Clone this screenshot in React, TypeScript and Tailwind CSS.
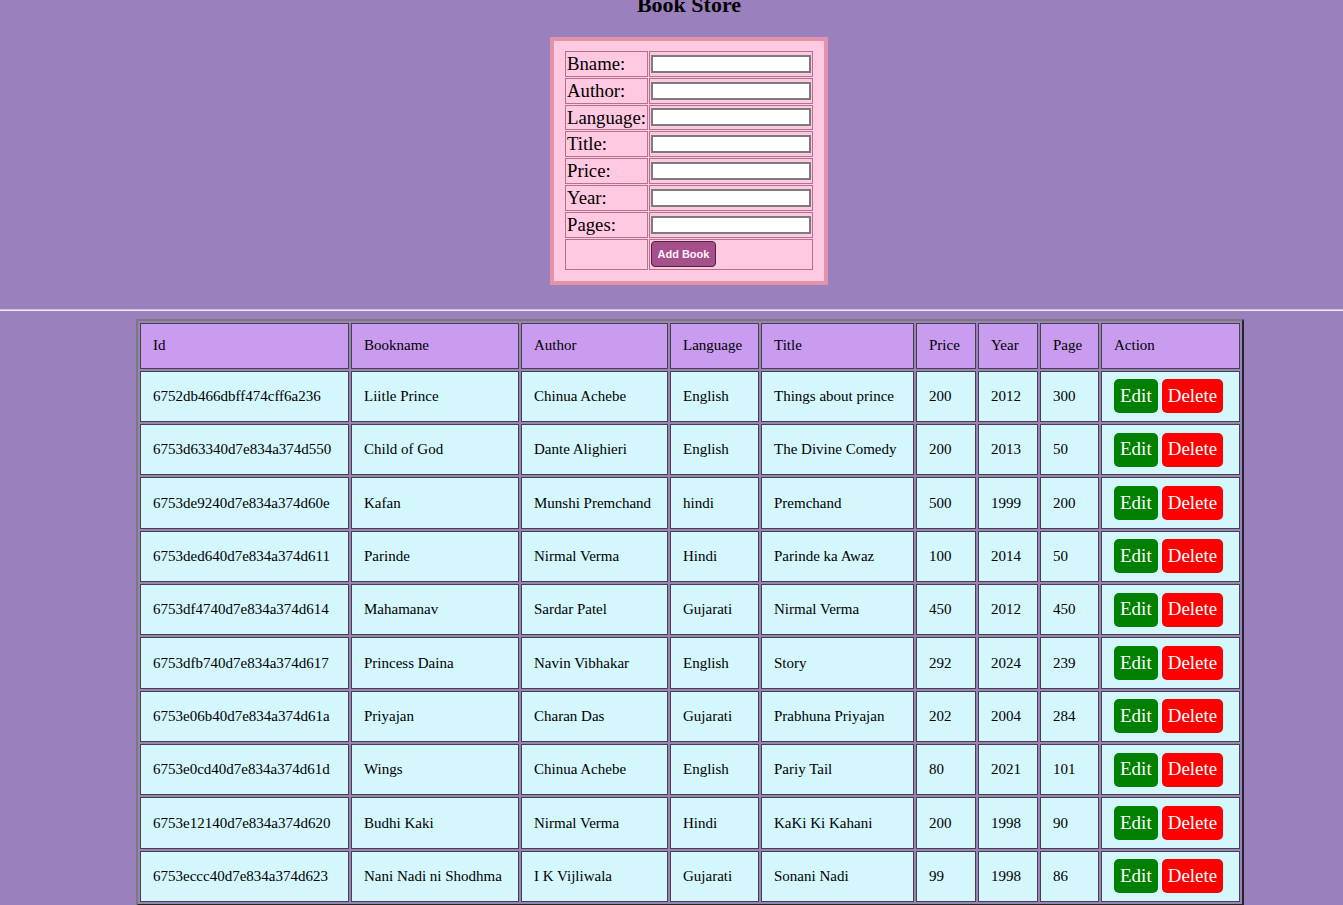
import React from "react";

const books = [
  ["6752db466dbff474cff6a236", "Liitle Prince", "Chinua Achebe", "English", "Things about prince", "200", "2012", "300"],
  ["6753d63340d7e834a374d550", "Child of God", "Dante Alighieri", "English", "The Divine Comedy", "200", "2013", "50"],
  ["6753de9240d7e834a374d60e", "Kafan", "Munshi Premchand", "hindi", "Premchand", "500", "1999", "200"],
  ["6753ded640d7e834a374d611", "Parinde", "Nirmal Verma", "Hindi", "Parinde ka Awaz", "100", "2014", "50"],
  ["6753df4740d7e834a374d614", "Mahamanav", "Sardar Patel", "Gujarati", "Nirmal Verma", "450", "2012", "450"],
  ["6753dfb740d7e834a374d617", "Princess Daina", "Navin Vibhakar", "English", "Story", "292", "2024", "239"],
  ["6753e06b40d7e834a374d61a", "Priyajan", "Charan Das", "Gujarati", "Prabhuna Priyajan", "202", "2004", "284"],
  ["6753e0cd40d7e834a374d61d", "Wings", "Chinua Achebe", "English", "Pariy Tail", "80", "2021", "101"],
  ["6753e12140d7e834a374d620", "Budhi Kaki", "Nirmal Verma", "Hindi", "KaKi Ki Kahani", "200", "1998", "90"],
  ["6753eccc40d7e834a374d623", "Nani Nadi ni Shodhma", "I K Vijliwala", "Gujarati", "Sonani Nadi", "99", "1998", "86"],
];

const fields = ["Bname:", "Author:", "Language:", "Title:", "Price:", "Year:", "Pages:"];

const headers: [string, string][] = [
  ["Id", "w-[209px]"],
  ["Bookname", "w-[168px]"],
  ["Author", "w-[147px]"],
  ["Language", "w-[89px]"],
  ["Title", "w-[153px]"],
  ["Price", "w-[60px]"],
  ["Year", "w-[60px]"],
  ["Page", "w-[59px]"],
  ["Action", "w-[139px]"],
];

export default function App() {
  return (
    <div
      className="h-[905px] overflow-hidden bg-[#9b80be] text-black"
      style={{ fontFamily: '"Liberation Serif", "Times New Roman", serif' }}
    >
      <div className="flex flex-col items-center pl-[35px]">
        <h2 className="-mt-[8px] text-[22px] font-bold leading-[25px] text-black">Book Store</h2>
        <div className="mt-[20px] border-4 border-[#e293aa] bg-[#ffc9e1] pt-[9px] pb-[10px] px-[10px]">
          <table className="border-separate border-spacing-[1px]">
            <tbody>
              {fields.map((f) => (
                <tr key={f}>
                  <td className="border border-[#b4738c] p-[1px] text-[18.72px] leading-[21.8px] whitespace-nowrap">
                    {f}
                  </td>
                  <td className="w-[164px] border border-[#b4738c] p-[1px] align-middle">
                    <input
                      type="text"
                      className="block h-[18px] w-[160px] border-2 border-[#7b7b7b] bg-white outline-none"
                    />
                  </td>
                </tr>
              ))}
              <tr>
                <td className="h-[31px] border border-[#b4738c] p-[1px]"></td>
                <td className="h-[31px] border border-[#b4738c] p-[1px] align-top">
                  <button
                    className="h-[26px] w-[65px] rounded-[4px] border border-[#4d2440] bg-[#a5508a] text-[11px] font-bold text-[#fdf2fa]"
                    style={{ fontFamily: '"Liberation Sans", Arial, sans-serif' }}
                  >
                    Add Book
                  </button>
                </td>
              </tr>
            </tbody>
          </table>
        </div>
      </div>
      <div className="mt-[24px] h-[2px] border-t border-t-[#c9c2d2] border-b border-b-[#ece9f0]"></div>
      <div className="flex flex-col items-center pl-[37px] pt-[8px]">
        <table className="table-fixed border-separate border-spacing-[2px] border-2 border-[#7a7a7a] [border-style:outset] text-[15px]">
          <thead>
            <tr>
              {headers.map(([h, w]) => (
                <th
                  key={h}
                  className={`${w} h-[46px] border border-[#444] bg-[#c99cf0] px-[12px] text-left align-middle font-normal`}
                >
                  {h}
                </th>
              ))}
            </tr>
          </thead>
          <tbody>
            {books.map((b) => (
              <tr key={b[0]}>
                {b.map((c, i) => (
                  <td
                    key={i}
                    className="h-[51.33px] border border-[#444] bg-[#d4f6fd] px-[12px] py-0 align-middle whitespace-nowrap"
                  >
                    {c}
                  </td>
                ))}
                <td className="h-[51.33px] border border-[#444] bg-[#d4f6fd] px-[12px] py-0 align-middle">
                  <div className="flex gap-[4px]">
                    <button className="h-[34px] rounded-[5px] bg-[#008000] px-[6px] text-[19px] text-white">
                      Edit
                    </button>
                    <button className="h-[34px] rounded-[5px] bg-[#ff0000] px-[6px] text-[19px] text-white">
                      Delete
                    </button>
                  </div>
                </td>
              </tr>
            ))}
          </tbody>
        </table>
      </div>
    </div>
  );
}
